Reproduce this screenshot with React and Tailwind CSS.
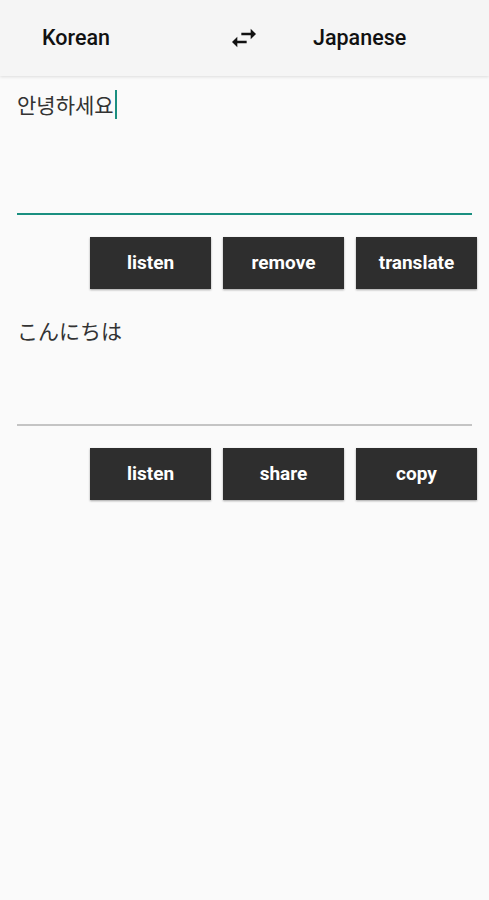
import React, { useState } from 'react';

const SwapIcon = () => (
  <svg viewBox="0 0 24 24" className="h-8 w-8" fill="#111">
    <path d="M6.99 11L3 15l3.99 4v-3H14v-2H6.99v-3zM21 9l-3.99-4v3H10v2h7.01v3L21 9z" />
  </svg>
);

const ActionButton = ({ label }) => (
  <button className="h-[52px] w-[121px] bg-[#2e2e2e] text-white text-[19px] font-bold shadow-[0_1px_2px_rgba(0,0,0,0.35)] font-['Roboto',sans-serif]">
    {label}
  </button>
);

const ButtonRow = ({ labels }) => (
  <div className="mt-[22px] flex justify-end gap-[12px] pr-[12px]">
    {labels.map((l) => (
      <ActionButton key={l} label={l} />
    ))}
  </div>
);

export default function App() {
  const [source, setSource] = useState({ from: 'Korean', to: 'Japanese' });

  const swap = () => setSource((s) => ({ from: s.to, to: s.from }));

  return (
    <div className="min-h-[900px] w-full bg-[#fafafa] font-['Roboto',sans-serif]">
      {/* Toolbar */}
      <div className="relative z-10 flex h-[76px] items-center bg-[#f5f5f5] pl-[42px] shadow-[0_1px_3px_rgba(0,0,0,0.12)]">
        <span className="w-[68px] text-[21.5px] font-medium text-[#111]">{source.from}</span>
        <button onClick={swap} className="ml-[118px] flex items-center justify-center">
          <SwapIcon />
        </button>
        <span className="ml-[53px] text-[21.5px] font-medium text-[#111]">{source.to}</span>
      </div>

      {/* Input */}
      <div className="px-[17px]">
        <div className="h-[139px] border-b-2 border-[#1a8f80] pt-[13px]">
          <div className="flex items-center text-[21px] leading-[30px] text-[#333] font-['Noto_Sans_CJK_KR','Noto_Sans_CJK_JP',sans-serif]">
            <span>안녕하세요</span>
            <span className="ml-[1px] inline-block h-[29px] w-[2px] bg-[#1a8f80]" />
          </div>
        </div>
      </div>
      <ButtonRow labels={['listen', 'remove', 'translate']} />

      {/* Output */}
      <div className="px-[17px]">
        <div className="h-[137px] border-b-2 border-[#c4c4c4] pt-[26px]">
          <div className="text-[21px] leading-[30px] text-[#333] font-['Noto_Sans_CJK_JP',sans-serif]">
            こんにちは
          </div>
        </div>
      </div>
      <ButtonRow labels={['listen', 'share', 'copy']} />
    </div>
  );
}
